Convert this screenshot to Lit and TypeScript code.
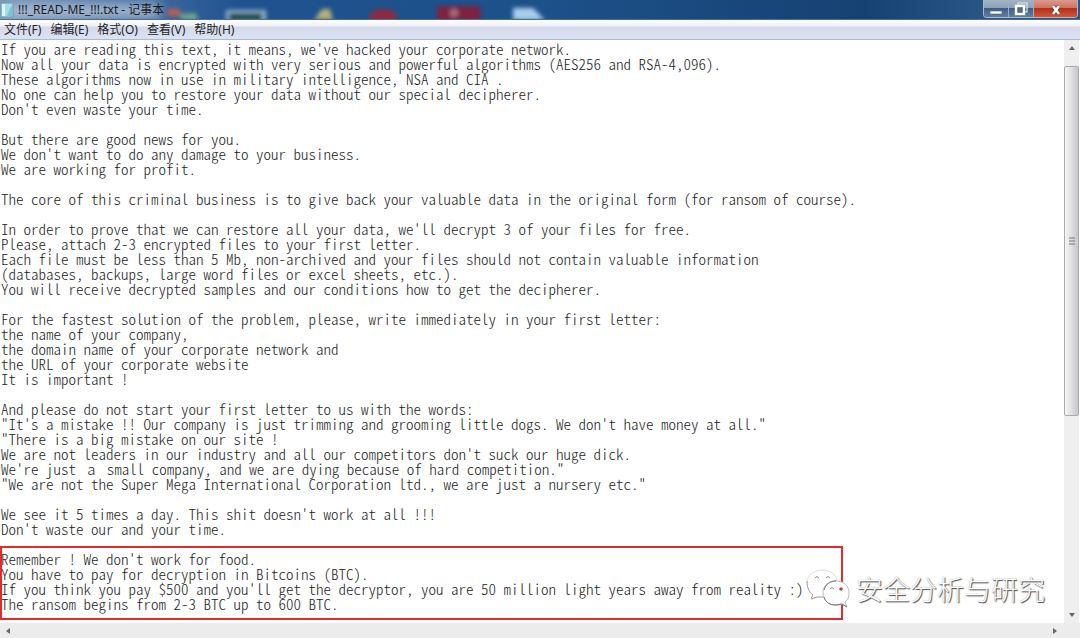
import { LitElement, html, css, svg } from "lit";
import { customElement } from "lit/decorators.js";

const NOTE = `If you are reading this text, it means, we've hacked your corporate network.
Now all your data is encrypted with very serious and powerful algorithms (AES256 and RSA-4,096).
These algorithms now in use in military intelligence, NSA and CIA .
No one can help you to restore your data without our special decipherer.
Don't even waste your time.

But there are good news for you.
We don't want to do any damage to your business.
We are working for profit.

The core of this criminal business is to give back your valuable data in the original form (for ransom of course).

In order to prove that we can restore all your data, we'll decrypt 3 of your files for free.
Please, attach 2-3 encrypted files to your first letter.
Each file must be less than 5 Mb, non-archived and your files should not contain valuable information
(databases, backups, large word files or excel sheets, etc.).
You will receive decrypted samples and our conditions how to get the decipherer.

For the fastest solution of the problem, please, write immediately in your first letter:
the name of your company,
the domain name of your corporate network and
the URL of your corporate website
It is important !

And please do not start your first letter to us with the words:
"It's a mistake !! Our company is just trimming and grooming little dogs. We don't have money at all."
"There is a big mistake on our site !
We are not leaders in our industry and all our competitors don't suck our huge dick.
We're just \u2005\u0430\u2005 small company, and we are dying because of hard competition."
"We are not the Super Mega International Corporation ltd., we are just a nursery etc."

We see it 5 times a day. This shit doesn't work at all !!!
Don't waste our and your time.

Remember ! We don't work for food.
You have to pay for decryption in Bitcoins (BTC).
If you think you pay $500 and you'll get the decryptor, you are 50 million light years away from reality :)
The ransom begins from 2-3 BTC up to 600 BTC.`;

const MENUS = ["文件(F)", "编辑(E)", "格式(O)", "查看(V)", "帮助(H)"];

const arrow = (points: string) => html`<svg width="8" height="8" viewBox="0 0 8 8" aria-hidden="true">
  ${svg`<polygon points=${points} fill="#666" />`}
</svg>`;

@customElement("title-bar")
class TitleBar extends LitElement {
  static styles = css`
    :host { display: block; }
    .bar {
      position: relative;
      display: flex;
      height: 20px;
      box-sizing: border-box;
      border-bottom: 1px solid #4a6d95;
      background: linear-gradient(90deg, #7390b5 0, #1f528f 240px, #1d5189 50%, #164173 80%, #2a5786 92%, #2a5786 100%);
      overflow: hidden;
    }
    .backdrop { position: absolute; left: 0; top: 0; }
    .caption {
      position: relative;
      display: flex;
      flex: 1;
      gap: 4px;
      align-items: center;
    }
    .title {
      margin: 0;
      font: 12px/20px "Noto Sans", "Noto Sans CJK SC", sans-serif;
      color: #1c1c1c;
      white-space: nowrap;
    }
    .controls {
      position: relative;
      display: flex;
      height: 17px;
      margin-right: 2px;
      border: 1px solid #a9b9cc;
      border-top: 0;
      border-radius: 0 0 4px 4px;
      overflow: hidden;
    }
    .control {
      display: grid;
      place-items: center;
      width: 25px;
      padding: 0;
      border: 0;
      border-right: 1px solid #9aaec6;
      background: linear-gradient(#a3b3c6 0, #8da1b8 45%, #3f5f86 50%, #62809f 100%);
    }
    .close {
      width: 43px;
      border-right: 0;
      background: linear-gradient(#d99a8c 0, #cf7361 45%, #b93016 50%, #d2563a 100%);
    }
  `;
  render() {
    return html`<header class="bar">
      <svg class="backdrop" width="640" height="20" aria-hidden="true">
        <defs>
          <filter id="soft" x="-30%" y="-60%" width="160%" height="220%"><feGaussianBlur stdDeviation="2" /></filter>
          <filter id="glow" x="-20%" y="-100%" width="140%" height="300%"><feGaussianBlur stdDeviation="6" /></filter>
        </defs>
        <rect x="0" y="4" width="160" height="14" fill="#b9c8dc" opacity=".85" filter="url(#glow)" />
        <g filter="url(#soft)">
          <path d="M166 10L178 8L182 16L168 16Z" fill="#b95f50" />
          <path d="M180 14L196 13L198 20L182 20Z" fill="#6fa889" />
          <rect x="226" y="10" width="40" height="12" fill="#91b3ce" />
          <rect x="229" y="13" width="33" height="8" fill="#214c46" />
          <path d="M314 20L322 9L330 9L333 20Z" fill="#b5ae76" />
          <ellipse cx="383" cy="17" rx="14" ry="8" fill="#8d2a40" />
          <rect x="437" y="6" width="43" height="16" fill="#7f2440" />
          <circle cx="454" cy="13" r="4" fill="#a8707c" />
          <path d="M513 8H533L545 20H513Z" fill="#a9cdec" />
        </g>
      </svg>
      <div class="caption">
        <svg width="14" height="16" viewBox="0 0 14 16" aria-hidden="true">
          <path d="M1 1H13V15H1Z" fill="#a6dbe8" stroke="#6b98ab" />
          <path d="M2 2H5V14H2Z" fill="#dff5f8" />
          <path d="M11 4H12V14H7Z" fill="#7cc4d5" />
        </svg>
        <h1 class="title">!!!_READ-ME_!!!.txt - 记事本</h1>
      </div>
      <div class="controls">
        <button class="control" aria-label="最小化">
          <svg width="14" height="14" viewBox="0 0 14 14"><rect x="1" y="9" width="12" height="3" fill="#fff" stroke="#445973" stroke-width=".6" /></svg>
        </button>
        <button class="control" aria-label="还原">
          <svg width="14" height="14" viewBox="0 0 14 14" fill="none">
            <path d="M4 3V1H13V10H11" stroke="#e3e7ec" stroke-width="1.200" />
            <rect x="2" y="4" width="8" height="8" fill="#586a80" stroke="#fff" stroke-width="2.400" />
          </svg>
        </button>
        <button class="control close" aria-label="关闭">
          <svg width="14" height="14" viewBox="0 0 14 14">
            <path d="M4 4L10 12M10 4L4 12" stroke="#6e3028" stroke-width="4" />
            <path d="M4 4L10 12M10 4L4 12" stroke="#fff" stroke-width="2.600" />
          </svg>
        </button>
      </div>
    </header>`;
  }
}

@customElement("menu-bar")
class MenuBar extends LitElement {
  static styles = css`
    :host { display: block; }
    .menu {
      display: flex;
      gap: 9px;
      height: 20px;
      padding-left: 4px;
      box-sizing: border-box;
      border-bottom: 1px solid #a9bcd3;
      background: linear-gradient(#fff 0, #eef0f8 6px, #d5daeb 7px, #dbe2f2 100%);
    }
    .item {
      padding: 0;
      border: 0;
      background: none;
      color: #222;
      font: 12px/19px "Noto Sans", "Noto Sans CJK SC", sans-serif;
      white-space: nowrap;
    }
  `;
  render() {
    return html`<nav class="menu">${MENUS.map((m) => html`<button class="item">${m}</button>`)}</nav>`;
  }
}

@customElement("app-root")
class AppRoot extends LitElement {
  static styles = css`
    :host {
      display: grid;
      grid-template-rows: auto auto 1fr auto;
      min-height: 100vh;
      background: #fff;
    }
    .body {
      display: grid;
      grid-template-columns: 1fr 16px;
    }
    .page { position: relative; display: grid; }
    .text {
      display: block;
      width: 100%;
      box-sizing: border-box;
      margin: 0;
      padding: 1px 1px 0;
      border: 0;
      outline: 0;
      resize: none;
      overflow: hidden;
      background: #fff;
      color: #222;
      font: 300 15px/15px "Noto Sans CJK SC", monospace;
      font-feature-settings: "hwid";
      font-variant-ligatures: none;
      white-space: pre;
    }
    .highlight {
      position: absolute;
      left: 0;
      top: 506px;
      width: 843px;
      height: 74px;
      box-sizing: border-box;
      border: 2px solid #e42a2a;
      pointer-events: none;
    }
    .watermark {
      position: absolute;
      right: 19px;
      bottom: 12px;
      display: flex;
      align-items: center;
      gap: 6px;
      pointer-events: none;
    }
    .brand {
      font: 300 27px/44px "Noto Sans CJK SC", sans-serif;
      color: #fff;
      text-shadow: 1px 1px 1px #444, 0 0 1px #888;
    }
    .vertical {
      display: flex;
      flex-direction: column;
      align-items: center;
      margin-right: 1px;
      padding: 4px 0;
      background: #efefef;
    }
    .track { flex: 1; width: 100%; padding: 14px 0; box-sizing: border-box; }
    .thumb {
      display: grid;
      place-items: center;
      height: 66%;
      box-sizing: border-box;
      border: 1px solid #aaa;
      border-radius: 2px;
      background: linear-gradient(90deg, #f5f5f5, #e2e2e4 45%, #c6c6cb);
    }
    .horizontal {
      display: flex;
      align-items: center;
      justify-content: space-between;
      height: 15px;
      padding: 0 21px 0 4px;
      background: #ececec;
    }
  `;
  render() {
    return html`
      <title-bar></title-bar>
      <menu-bar></menu-bar>
      <main class="body">
        <div class="page">
          <textarea class="text" aria-label="文本" spellcheck="false" wrap="off" .value=${NOTE}></textarea>
          <div class="highlight"></div>
          <div class="watermark">
            <svg width="44" height="40" viewBox="0 0 44 40" aria-hidden="true">
              <path d="M16 1C7 1 1 7 1 14C1 19 3 23 7 26L5 30L11 28L17 28L31 12C30 6 25 1 16 1Z" fill="#fff" />
              <path d="M31 12C30 6 25 1 16 1C7 1 1 7 1 14" fill="none" stroke="#ddd" />
              <path d="M1 12C1 19 3 23 7 26L5 30L11 28L17 28" fill="none" stroke="#999" />
              <path d="M30 12C22 12 17 17 17 24S22 36 30 36C32 36 34 36 36 35L41 38L39 33C42 31 43 28 43 24C43 17 38 12 30 12Z" fill="#fff" stroke="#bbb" />
              <path d="M18 28C20 34 24 36 30 36L36 35L41 38M18 21C20 15 24 12 30 12" fill="none" stroke="#777" />
              <path d="M9 9Q11 6 13 9M20 9Q22 6 24 9M24 20Q26 17 28 20" fill="none" stroke="#888" />
              <circle cx="35" cy="20" r="1.800" fill="#b44" />
            </svg>
            <span class="brand">安全分析与研究</span>
          </div>
        </div>
        <div class="vertical">
          ${arrow("1,6 4,2 7,6")}
          <div class="track">
            <div class="thumb">
              <svg width="8" height="9" viewBox="0 0 8 9" aria-hidden="true">
                <path d="M1 1H7M1 4H7M1 7H7" stroke="#777" />
              </svg>
            </div>
          </div>
          ${arrow("1,2 4,6 7,2")}
        </div>
      </main>
      <div class="horizontal">${arrow("6,1 2,4 6,7")}${arrow("2,1 6,4 2,7")}</div>
    `;
  }
}
